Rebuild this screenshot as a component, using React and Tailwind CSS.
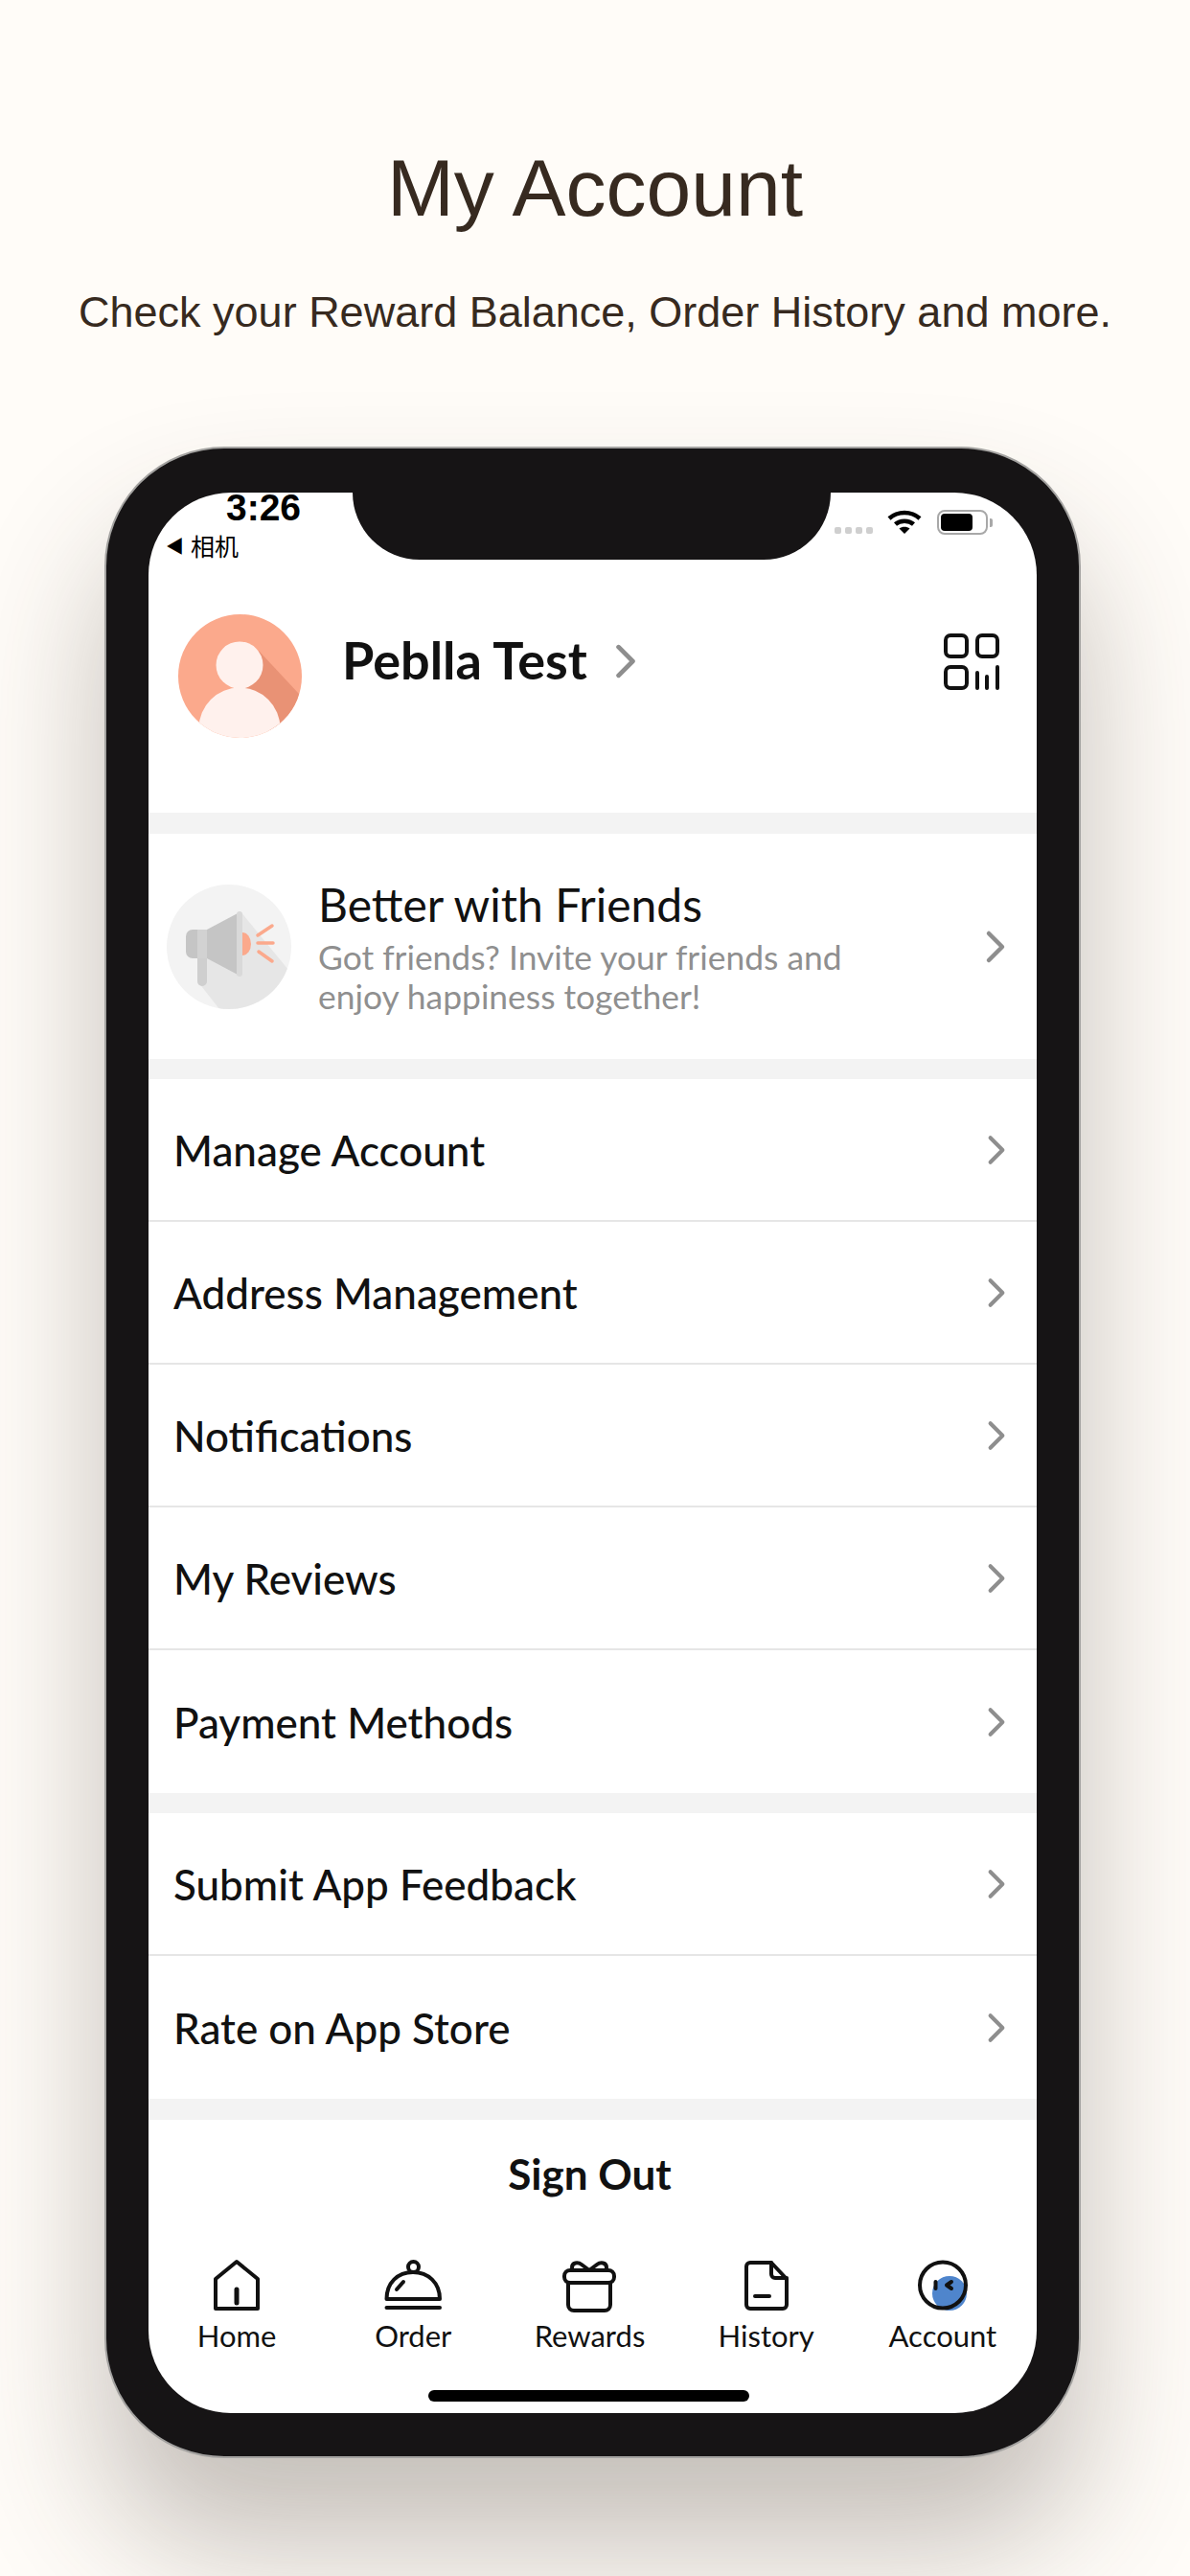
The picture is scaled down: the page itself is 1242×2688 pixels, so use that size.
import React from 'react';

const Chevron = ({ className = 'w-[22px] h-[34px]' }) => (
  <svg viewBox="0 0 22 34" className={className} fill="none" stroke="#8e8e8e" strokeWidth="4.5" strokeLinecap="round" strokeLinejoin="round">
    <path d="M4 3 L18 17 L4 31" />
  </svg>
);

const Avatar = () => (
  <svg viewBox="0 0 129 129" className="w-[129px] h-[129px] shrink-0">
    <defs>
      <clipPath id="avatarClip"><circle cx="64.5" cy="64.5" r="64.5" /></clipPath>
    </defs>
    <g clipPath="url(#avatarClip)">
      <rect width="129" height="129" fill="#fba98c" />
      <polygon points="84,38 126,83 120,129 100,129 60,70" fill="#e99275" />
      <circle cx="64" cy="119" r="42.5" fill="#fff1ed" />
      <circle cx="64" cy="53" r="24.5" fill="#fff1ed" />
    </g>
  </svg>
);

const Megaphone = () => (
  <svg viewBox="0 0 130 130" className="w-[130px] h-[130px] shrink-0">
    <defs>
      <clipPath id="megaClip"><circle cx="65" cy="65" r="65" /></clipPath>
    </defs>
    <g clipPath="url(#megaClip)">
      <rect width="130" height="130" fill="#f3f3f3" />
      <polygon points="77,28 127,89 130,130 55,130 33,102 40,70" fill="#e6e6e6" />
    </g>
    <rect x="32" y="70" width="10" height="36" rx="5" fill="#cfcfcf" />
    <path d="M32 47 H27 A7 7 0 0 0 20 54 V70 A7 7 0 0 0 27 77 H32 Z" fill="#c5c5c5" />
    <rect x="32" y="47" width="10" height="30" fill="#d2d2d2" />
    <polygon points="42,47 74,30 74,94 42,77" fill="#c5c5c5" />
    <rect x="73" y="28" width="6" height="68" rx="3" fill="#d9d9d9" />
    <path d="M79 50 A9 12 0 0 1 79 74 Z" fill="#fba98c" />
    <g stroke="#fba98c" strokeWidth="3.5" strokeLinecap="round">
      <path d="M95 53 L110 43" />
      <path d="M95 61 L111 61" />
      <path d="M96 70 L110 80" />
    </g>
  </svg>
);

const QrIcon = () => (
  <svg viewBox="0 0 58 59" className="w-[58px] h-[59px]" fill="none" stroke="#111" strokeWidth="4" strokeLinecap="round">
    <rect x="2" y="2" width="22" height="22" rx="5" />
    <rect x="35" y="2" width="21" height="22" rx="5" />
    <rect x="2" y="35" width="22" height="22" rx="5" />
    <path d="M35 41 V57" />
    <path d="M45 45 V57" />
    <path d="M56 35 V57" />
  </svg>
);

const iconProps = {
  viewBox: '0 0 64 56',
  className: 'w-[64px] h-[56px]',
  fill: 'none',
  stroke: '#111',
  strokeWidth: 4,
  strokeLinecap: 'round',
  strokeLinejoin: 'round',
};

const HomeIcon = () => (
  <svg {...iconProps}>
    <path d="M32 3 L10 21 V52 H54 V21 Z" />
    <path d="M32 32 V46" strokeWidth="5" />
  </svg>
);

const OrderIcon = () => (
  <svg {...iconProps}>
    <circle cx="32.5" cy="8.5" r="5.5" />
    <path d="M4.5 42 C4.5 25 16 14 32 14 C48 14 60 25 60 42 Z" />
    <path d="M4.5 51 H60" />
    <path d="M15 32 L22 24" />
  </svg>
);

const GiftIcon = () => (
  <svg {...iconProps}>
    <rect x="6" y="12" width="52" height="13" rx="6" />
    <path d="M10 25 V48 A6 6 0 0 0 16 54 H48 A6 6 0 0 0 54 48 V25" />
    <path d="M32 12 L24 6 C20 3 14 4 14 9 C14 11 15 12 16 12" />
    <path d="M32 12 L40 6 C44 3 50 4 50 9 C50 11 49 12 48 12" />
  </svg>
);

const HistoryIcon = () => (
  <svg {...iconProps}>
    <path d="M15 4 H37 L53 21 V48 A4 4 0 0 1 49 52 H15 A4 4 0 0 1 11 48 V8 A4 4 0 0 1 15 4 Z" />
    <path d="M37 4 V16 A4 4 0 0 0 41 20 H53" />
    <path d="M20 39 H35" />
  </svg>
);

const AccountIcon = () => (
  <svg {...iconProps}>
    <circle cx="39" cy="36" r="18" fill="#4f85cc" stroke="none" />
    <circle cx="32" cy="27.5" r="24" />
    <path d="M24.5 24 V31" />
    <path d="M41 24 L36 27.5 L41 31" />
  </svg>
);

const Row = ({ label, last }) => (
  <div className={`flex items-center justify-between h-[149px] pl-[26px] pr-[32px] ${last ? '' : 'border-b-2 border-[#e6e6e6]'}`}>
    <span className="text-[44px] font-medium text-[#111]">{label}</span>
    <Chevron className="w-[20px] h-[32px]" />
  </div>
);

const Gap = ({ className }) => <div className={`bg-[#f3f3f3] ${className}`} />;

const tabs = [
  { label: 'Home', Icon: HomeIcon },
  { label: 'Order', Icon: OrderIcon },
  { label: 'Rewards', Icon: GiftIcon },
  { label: 'History', Icon: HistoryIcon },
  { label: 'Account', Icon: AccountIcon },
];

export default function App() {
  return (
    <div className="w-[1242px] h-[2688px] overflow-hidden bg-[#fffcf8] flex flex-col [font-family:Lato,sans-serif]">
      <div className="flex flex-col items-center text-[#372a20] [font-family:'Liberation_Sans',sans-serif] h-[466px] pt-[138px]">
        <h1 className="text-[84px] leading-[116px]">My Account</h1>
        <p className="text-[45px] leading-[60px] mt-[42px]">Check your Reward Balance, Order History and more.</p>
      </div>

      <div className="ml-[109px] w-[1019px] h-[2099px] rounded-[125px] bg-[#161415] border-2 border-[#a3a2a0] pt-[46px] pb-[45px] px-[44px] shadow-[0_90px_140px_rgba(60,50,40,0.3)]">
        <div className="relative w-full h-full bg-white rounded-[86px] overflow-hidden flex flex-col">
          <div className="absolute top-0 left-[213px] w-[499px] h-[70px] bg-[#161415] rounded-b-[70px]" />

          <div className="h-[70px] flex justify-between text-black [font-family:'Liberation_Sans',sans-serif]">
            <div className="flex flex-col pl-[18px]">
              <span className="text-[39px] leading-[32px] font-bold ml-[63px]">3:26</span>
              <div className="flex items-center mt-[10px] [font-family:'Liberation_Sans','Noto_Sans_CJK_SC',sans-serif]">
                <span className="text-[19px] leading-[30px] w-[26px]">◀</span>
                <span className="text-[25px] leading-[30px]">相机</span>
              </div>
            </div>
            <div className="flex items-start pr-[46px] pt-[18px]">
              <div className="flex gap-[4px] mt-[18px] mr-[15px]">
                <div className="w-[7px] h-[7px] rounded-[2px] bg-[#cfcfcf]" />
                <div className="w-[7px] h-[7px] rounded-[2px] bg-[#cfcfcf]" />
                <div className="w-[7px] h-[7px] rounded-[2px] bg-[#cfcfcf]" />
                <div className="w-[7px] h-[7px] rounded-[2px] bg-[#cfcfcf]" />
              </div>
              <svg viewBox="0 0 36 26" className="w-[36px] h-[26px] mr-[16px]" fill="none" stroke="#000" strokeWidth="4.5">
                <path d="M2 9 C11 1 25 1 34 9" />
                <path d="M8.5 15 C13.5 10.5 22.5 10.5 27.5 15" />
                <path d="M18 25 L12.5 19.5 C15.5 17 20.5 17 23.5 19.5 Z" fill="#000" stroke="none" />
              </svg>
              <div className="flex items-center">
                <div className="w-[53px] h-[26px] rounded-[8px] border-2 border-[#a8a8a8] p-[2px] pr-[14px]">
                  <div className="w-full h-full bg-black rounded-[4px]" />
                </div>
                <div className="w-[3px] h-[9px] ml-[2px] rounded-r-[2px] bg-[#a8a8a8]" />
              </div>
            </div>
          </div>

          <div className="h-[264px] flex items-start pl-[31px] pr-[39px] pt-[57px]">
            <Avatar />
            <div className="flex items-center ml-[42px] mt-[16px]">
              <span className="text-[54px] leading-[64px] font-bold text-[#111]">Peblla Test</span>
              <Chevron className="w-[24px] h-[36px] ml-[28px] mt-[2px]" />
            </div>
            <div className="ml-auto mt-[20px]">
              <QrIcon />
            </div>
          </div>

          <Gap className="h-[22px]" />

          <div className="h-[235px] flex items-center pl-[19px] pr-[32px]">
            <Megaphone />
            <div className="ml-[28px] flex-1">
              <div className="text-[48px] leading-[56px] text-[#111]">Better with Friends</div>
              <div className="text-[35.4px] leading-[41px] text-[#8f8f8f] mt-[6px] w-[600px]">Got friends? Invite your friends and enjoy happiness together!</div>
            </div>
            <Chevron className="w-[22px] h-[36px]" />
          </div>

          <Gap className="h-[21px]" />

          <Row label="Manage Account" />
          <Row label="Address Management" />
          <Row label="Notifications" />
          <Row label="My Reviews" />
          <Row label="Payment Methods" last />

          <Gap className="h-[21px]" />

          <Row label="Submit App Feedback" />
          <Row label="Rate on App Store" last />

          <Gap className="h-[22px]" />

          <div className="h-[112px] flex items-center justify-center pr-[6px] text-[44px] font-bold text-[#111]">Sign Out</div>

          <div className="flex-1 flex flex-col">
            <div className="grid grid-cols-5 pt-[33px] pr-[6px]">
              {tabs.map(({ label, Icon }) => (
                <div key={label} className="flex flex-col items-center">
                  <Icon />
                  <span className="text-[31px] leading-[36px] mt-[6px] text-[#111]">{label}</span>
                </div>
              ))}
            </div>
            <div className="mt-auto mb-[12px] ml-[292px] w-[335px] h-[12px] rounded-full bg-black" />
          </div>
        </div>
      </div>
    </div>
  );
}
